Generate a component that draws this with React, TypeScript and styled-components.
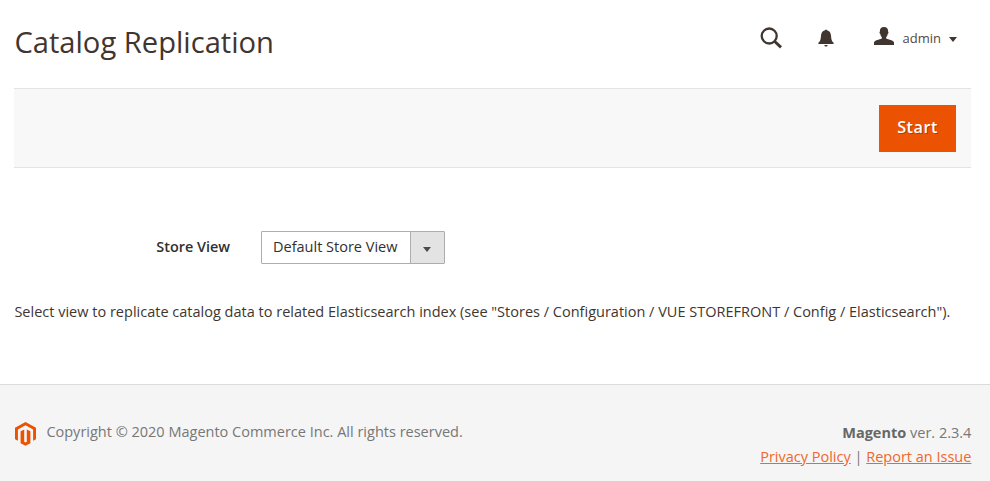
import React from "react";
import styled, { createGlobalStyle } from "styled-components";

const GlobalStyle = createGlobalStyle`
  * { box-sizing: border-box; }
  body {
    margin: 0;
    background: #fff;
    color: #41362f;
    font: 400 14.5px/20px "Open Sans", "Helvetica Neue", Helvetica, Arial, sans-serif;
  }
`;

const Page = styled.div`
  display: flex;
  flex-direction: column;
  height: 481px;
  overflow: hidden;
`;

const Header = styled.header`
  display: flex;
  justify-content: space-between;
  height: 88px;
  padding: 0 33px 0 14px;
`;

const Title = styled.h1`
  margin: 22px 0 0 0.4px;
  font-size: 29.15px;
  line-height: 40px;
  font-weight: 400;
`;

const HeaderActions = styled.div`
  display: flex;
  align-items: center;
  height: 76px;
`;

const IconButton = styled.button<{ $gap: number }>`
  display: flex;
  margin: 0 ${(p) => p.$gap}px 0 0;
  padding: 0;
  border: 0;
  background: none;
  color: #41362f;
`;

const Account = styled.div`
  display: flex;
  align-items: center;
  font-size: 13px;

  > svg {
    margin-bottom: 4px;
  }
`;

const AccountName = styled.span`
  margin: 0 8px 0 9px;
  color: #514943;
`;

const Caret = styled.span`
  width: 0;
  height: 0;
  margin-top: 2px;
  border: 4px solid transparent;
  border-top: 5px solid currentColor;
  border-bottom: 0;
`;

const Toolbar = styled.div`
  display: flex;
  justify-content: flex-end;
  height: 80px;
  margin: 0 19px 0 14px;
  padding: 16px 15px;
  background: #f8f8f8;
  border: solid #e3e3e3;
  border-width: 1px 0;
`;

const PrimaryButton = styled.button`
  width: 77px;
  height: 47px;
  padding: 0 0 3px;
  border: 0;
  background: #eb5202;
  color: #fff;
  font: 600 16.2px/22px "Open Sans", sans-serif;
  letter-spacing: 0.5px;
  text-shadow: 1px 1px 0 rgba(0, 0, 0, 0.25);
`;

const Field = styled.div`
  display: flex;
  align-items: center;
  height: 33px;
  margin: 63px 0 0 14px;
`;

const Label = styled.label`
  width: 216px;
  margin-right: 31px;
  padding-bottom: 2px;
  color: #303030;
  font-size: 14.4px;
  font-weight: 600;
  text-align: right;
`;

const Select = styled.div`
  display: flex;
  width: 184px;
  height: 33px;
  border: 1px solid #adadad;
  border-radius: 1px;
  color: #303030;
`;

const SelectValue = styled.span`
  flex: 1;
  padding: 5px 0 0 11px;
  white-space: nowrap;
`;

const SelectArrow = styled.span`
  display: flex;
  align-items: center;
  justify-content: center;
  width: 34px;
  padding: 2px 1px 0 0;
  border-left: 1px solid #adadad;
  background: #e3e3e3;
  color: #514943;
`;

const Note = styled.p`
  margin: 38px 0 0 14.4px;
  letter-spacing: 0.004px;
  white-space: nowrap;
`;

const Footer = styled.footer`
  display: flex;
  justify-content: space-between;
  height: 97px;
  margin-top: auto;
  padding: 36px 18.6px 0 15px;
  border-top: 1px solid #dcdcdc;
  background: #f5f5f5;
  color: #777;
  line-height: 24px;
`;

const Copyright = styled.div`
  display: flex;
  align-items: flex-start;
  gap: 10.4px;
  line-height: 22px;
`;

const Legal = styled.div`
  text-align: right;
`;

const Product = styled.strong`
  color: #676767;
`;

const Link = styled.a`
  color: #ef672f;
  text-decoration: underline;
`;

const SearchIcon = () => (
  <svg width="22" height="22" viewBox="0 0 22 22" fill="none" stroke="currentColor">
    <circle cx="9.200" cy="9" r="7.5" strokeWidth="2.300" />
    <path d="M14.500 14.300 21 20.400" strokeWidth="2.900" />
  </svg>
);

const BellIcon = () => (
  <svg width="16" height="18" viewBox="0 0 16 18" fill="currentColor">
    <path d="M7 1.2a1.1 1.1 0 0 1 2 0c2.5.6 3.800 2.600 4 5.300.2 3.400.5 5.600 2.600 7.200v1.300H.4v-1.300C2.5 12.100 2.800 9.900 3 6.500c.2-2.700 1.500-4.700 4-5.300z" />
    <path d="M6.300 16h3.400c-.2 1-.8 1.600-1.700 1.600S6.500 17 6.300 16z" />
  </svg>
);

const UserIcon = () => (
  <svg width="20" height="18" viewBox="0 0 20 18" fill="currentColor">
    <path d="M10 0c2.900 0 4.200 1.700 4.100 4.400.7.200.4 2.100-.4 2.500-.3 1.500-.8 2.500-1.500 3.200v1.300c2.600 1.200 7.300 1.600 7.800 4V18H0v-2.600c.5-2.400 5.200-2.800 7.800-4v-1.300C7.100 9.400 6.600 8.400 6.300 6.900c-.8-.4-1.100-2.300-.4-2.500C5.800 1.700 7.100 0 10 0z" />
  </svg>
);

const MagentoLogo = () => (
  <svg width="21" height="25" viewBox="0 0 21 25" fill="#eb5202">
    <path d="M10.500 1 21 6.800v11.400l-2.900 1.600V8.500l-7.600-4.300-7.600 4.300v11.300L0 18.200V6.800z" />
    <path d="M9.200 8.600v12.200l1.300.8 1.300-.8V8.600l3.600 1.600v12l-4.900 2.600-4.900-2.600v-12z" />
  </svg>
);

export default function App() {
  return (
    <Page>
      <GlobalStyle />
      <Header>
        <Title>Catalog Replication</Title>
        <HeaderActions>
          <IconButton $gap={36} aria-label="Search"><SearchIcon /></IconButton>
          <IconButton $gap={40} aria-label="Notifications"><BellIcon /></IconButton>
          <Account>
            <UserIcon />
            <AccountName>admin</AccountName>
            <Caret />
          </Account>
        </HeaderActions>
      </Header>
      <Toolbar>
        <PrimaryButton>Start</PrimaryButton>
      </Toolbar>
      <Field>
        <Label>Store View</Label>
        <Select>
          <SelectValue>Default Store View</SelectValue>
          <SelectArrow><Caret /></SelectArrow>
        </Select>
      </Field>
      <Note>
        Select view to replicate catalog data to related Elasticsearch index (see "Stores / Configuration / VUE STOREFRONT / Config / Elasticsearch").
      </Note>
      <Footer>
        <Copyright>
          <MagentoLogo />
          <span>Copyright © 2020 Magento Commerce Inc. All rights reserved.</span>
        </Copyright>
        <Legal>
          <div><Product>Magento</Product> ver. 2.3.4</div>
          <div><Link>Privacy Policy</Link> | <Link>Report an Issue</Link></div>
        </Legal>
      </Footer>
    </Page>
  );
}
